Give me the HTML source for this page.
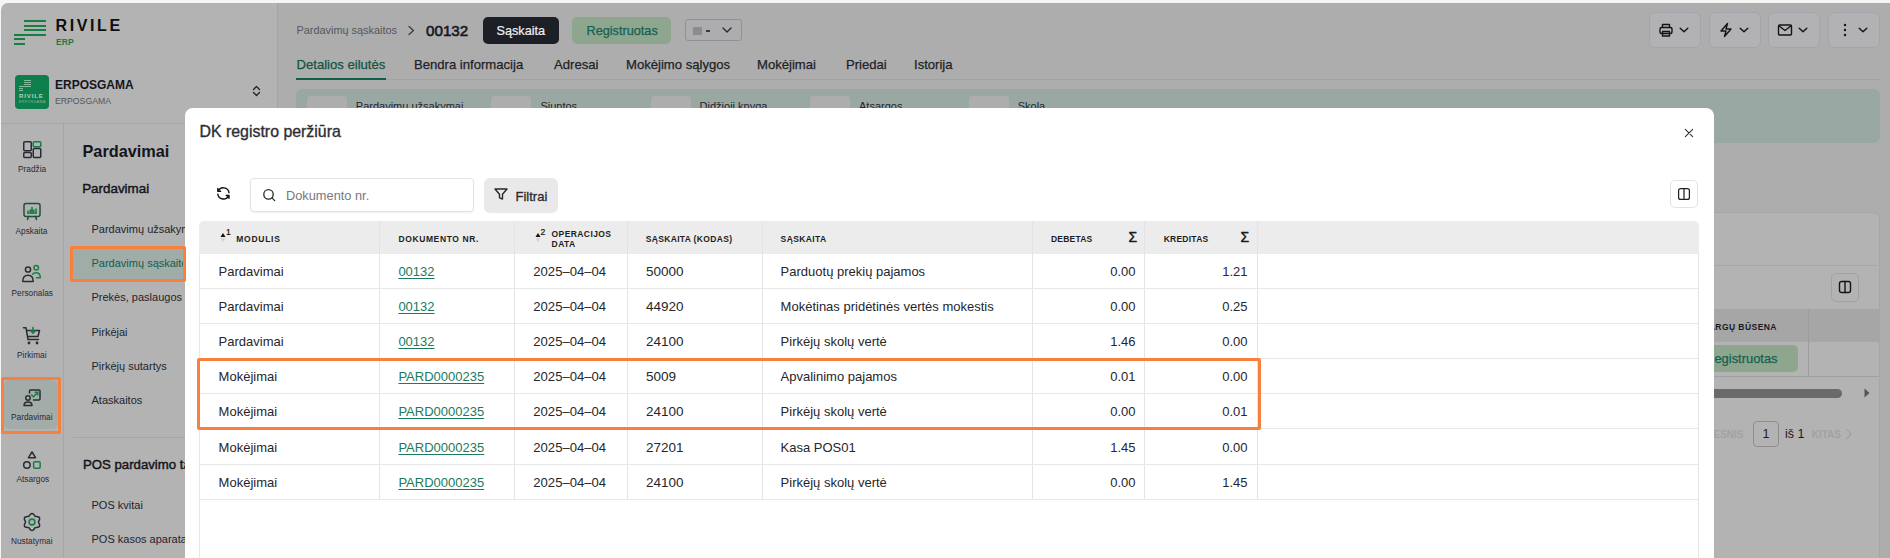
<!DOCTYPE html>
<html><head><meta charset="utf-8"><style>
html,body{margin:0;padding:0;}
body{width:1890px;height:558px;overflow:hidden;background:#f5f5f5;position:relative;font-family:"Liberation Sans",sans-serif;}
body>div,body>svg{position:absolute;}
.t{white-space:nowrap;line-height:1;}
</style></head><body>
<div style="left:1px;top:3px;width:277px;height:600px;background:#b3b3b3;border-top-left-radius:7px;"></div>
<div style="left:278px;top:3px;width:1612px;height:600px;background:#adadae;"></div>
<div style="left:1px;top:123px;width:277px;height:1px;background:#a5a5a5;"></div>
<div style="left:277px;top:3px;width:1px;height:600px;background:#a5a5a5;"></div>
<div style="left:63px;top:124px;width:1px;height:500px;background:#a5a5a5;"></div>
<div style="left:24px;top:20px;width:22px;height:2px;background:#177f44;"></div>
<div style="left:24px;top:24.5px;width:22px;height:2px;background:#177f44;"></div>
<div style="left:24px;top:29px;width:22px;height:2px;background:#177f44;"></div>
<div style="left:14px;top:33.5px;width:32px;height:2px;background:#177f44;"></div>
<div style="left:14px;top:38px;width:11px;height:2px;background:#177f44;"></div>
<div style="left:14px;top:42.5px;width:11px;height:2px;background:#177f44;"></div>
<div class="t" style="left:55.5px;top:18px;font-size:16px;color:#0d0d0d;font-weight:700;letter-spacing:2.6px;">RIVILE</div>
<div class="t" style="left:56px;top:37.7px;font-size:8.6px;color:#177f44;font-weight:700;">ERP</div>
<div style="left:15px;top:75px;width:34px;height:34px;background:#0d7e4c;border-radius:4px;"></div>
<div style="left:23.5px;top:80px;width:7.5px;height:1px;background:#7fbf9f;"></div>
<div style="left:23.5px;top:82px;width:7.5px;height:1px;background:#7fbf9f;"></div>
<div style="left:23.5px;top:84px;width:7.5px;height:1px;background:#7fbf9f;"></div>
<div style="left:19px;top:86px;width:12px;height:1px;background:#7fbf9f;"></div>
<div style="left:19px;top:88px;width:4px;height:1px;background:#7fbf9f;"></div>
<div style="left:19px;top:90px;width:4px;height:1px;background:#7fbf9f;"></div>
<div class="t" style="left:19px;top:93px;font-size:6.2px;color:#a9d3bb;font-weight:700;letter-spacing:0.8px;">RIVILE</div>
<div class="t" style="left:19px;top:100.5px;font-size:3.6px;color:#80bd9c;letter-spacing:0.4px;">ERPOSGAMA</div>
<div class="t" style="left:55px;top:79px;font-size:12px;color:#15151c;font-weight:700;">ERPOSGAMA</div>
<div class="t" style="left:55px;top:97px;font-size:8.7px;color:#55555c;">ERPOSGAMA</div>
<svg style="position:absolute;left:251px;top:85px" width="11" height="12" viewBox="0 0 11 12"><path d="M2.5 4.5 L5.5 1.5 L8.5 4.5 M2.5 7.5 L5.5 10.5 L8.5 7.5" fill="none" stroke="#222" stroke-width="1.3" stroke-linecap="round" stroke-linejoin="round"/></svg>
<svg style="position:absolute;left:22px;top:140px" width="20" height="19" viewBox="0 0 20 19" fill="none" stroke-linecap="round" stroke-linejoin="round"><rect x="1.75" y="1.75" width="7.5" height="9" rx="1" stroke="#2a2c33" stroke-width="1.5"/><rect x="1.75" y="12.5" width="7.5" height="5" rx="1" stroke="#2a2c33" stroke-width="1.5"/><rect x="11.25" y="1.75" width="7.5" height="5" rx="1" stroke="#177f44" stroke-width="1.5"/><rect x="11.25" y="8.5" width="7.5" height="9" rx="1" stroke="#2a2c33" stroke-width="1.5"/></svg>
<div class="t" style="left:18px;top:165px;font-size:8.3px;color:#2a2a33;">Pradžia</div>
<svg style="position:absolute;left:22px;top:202px" width="20" height="20" viewBox="0 0 20 20" fill="none" stroke-linecap="round" stroke-linejoin="round"><rect x="2" y="1.5" width="16" height="13" rx="2" stroke="#1f4f3c" stroke-width="1.5"/><path d="M6.5 14.5 L5.5 17.5 M13.5 14.5 L14.5 17.5" stroke="#1f4f3c" stroke-width="1.5"/><path d="M6 11 V9 M8.3 11 V8 M10 11 V5.5 M11.7 11 V8 M14 11 V7" stroke="#177f44" stroke-width="1.6"/><path d="M5.5 11.2 H14.5" stroke="#177f44" stroke-width="1.2"/></svg>
<div class="t" style="left:15.5px;top:227px;font-size:8.3px;color:#2a2a33;">Apskaita</div>
<svg style="position:absolute;left:21px;top:264px" width="22" height="20" viewBox="0 0 22 20" fill="none" stroke-linecap="round" stroke-linejoin="round"><circle cx="7" cy="5.5" r="2.6" stroke="#2a2c33" stroke-width="1.5"/><path d="M1.8 17.5 C1.8 13 4 11.3 7 11.3 C10 11.3 12.2 13 12.2 17.5 Z" stroke="#2a2c33" stroke-width="1.5"/><circle cx="15.2" cy="3.8" r="2.3" stroke="#177f44" stroke-width="1.5"/><path d="M11.5 10.3 C12.2 9.2 13.5 8.7 15.2 8.7 C17.8 8.7 19.3 10.5 19.3 13.7 H15.5" stroke="#177f44" stroke-width="1.5"/></svg>
<div class="t" style="left:11.5px;top:289px;font-size:8.3px;color:#2a2a33;">Personalas</div>
<svg style="position:absolute;left:22px;top:326px" width="20" height="20" viewBox="0 0 20 20" fill="none" stroke-linecap="round" stroke-linejoin="round"><path d="M1.5 1.8 H4 L6 13.5 H16.5" stroke="#2a2c33" stroke-width="1.5"/><path d="M5 4.5 H17.5 L16 10.5 H6" stroke="#2a2c33" stroke-width="1.5"/><circle cx="7" cy="17" r="1.4" fill="#2a2c33"/><circle cx="15" cy="17" r="1.4" fill="#2a2c33"/><path d="M11 1.5 V6.5 M8.8 4.8 L11 7.2 L13.2 4.8" stroke="#177f44" stroke-width="1.6"/></svg>
<div class="t" style="left:17px;top:351px;font-size:8.3px;color:#2a2a33;">Pirkimai</div>
<div style="left:4px;top:380px;width:54px;height:49px;background:#a3aca8;border-radius:6px;"></div>
<svg style="position:absolute;left:22px;top:388px" width="20" height="20" viewBox="0 0 20 20" fill="none" stroke-linecap="round" stroke-linejoin="round"><path d="M7.5 5 V3 C7.5 2.4 7.9 2 8.5 2 H17 C17.6 2 18 2.4 18 3 V11 C18 11.6 17.6 12 17 12 H11.5" stroke="#2a2c33" stroke-width="1.5"/><circle cx="6" cy="10" r="2.2" stroke="#2a2c33" stroke-width="1.5"/><path d="M2 17.5 C2 15 3.5 14 6 14 C8.5 14 10 15 10 17.5 Z" stroke="#2a2c33" stroke-width="1.5"/><path d="M9.5 7 L11.5 8.8 L15.5 4.5 M13.3 4.3 H15.8 V6.8" stroke="#177f44" stroke-width="1.5"/></svg>
<div class="t" style="left:11px;top:413px;font-size:8.3px;color:#2a2a33;">Pardavimai</div>
<svg style="position:absolute;left:22px;top:449px" width="20" height="21" viewBox="0 0 20 21" fill="none" stroke-linecap="round" stroke-linejoin="round"><path d="M10 2.9 L13.5 8.65 H6.5 Z" stroke="#2a2c33" stroke-width="1.5"/><circle cx="4.9" cy="16" r="3.25" stroke="#2a2c33" stroke-width="1.5"/><rect x="11.65" y="12.75" width="6.5" height="6.5" rx="1" stroke="#177f44" stroke-width="1.5"/></svg>
<div class="t" style="left:16.5px;top:475px;font-size:8.3px;color:#2a2a33;">Atsargos</div>
<svg style="position:absolute;left:22px;top:512px" width="20" height="20" viewBox="0 0 20 20" fill="none" stroke-linecap="round" stroke-linejoin="round"><path d="M8.36 2.27 C8.90 1.78 9.45 1.40 10.00 1.40 C10.55 1.40 11.10 1.78 11.64 2.27 C12.18 2.77 12.55 3.96 13.25 4.37 C13.95 4.78 15.17 4.49 15.87 4.71 C16.57 4.94 17.17 5.23 17.45 5.70 C17.72 6.17 17.67 6.84 17.51 7.56 C17.36 8.28 16.50 9.19 16.50 10.00 C16.50 10.81 17.36 11.72 17.51 12.44 C17.67 13.16 17.72 13.83 17.45 14.30 C17.17 14.77 16.57 15.06 15.87 15.29 C15.17 15.51 13.95 15.22 13.25 15.63 C12.55 16.04 12.18 17.23 11.64 17.73 C11.10 18.22 10.55 18.60 10.00 18.60 C9.45 18.60 8.90 18.22 8.36 17.73 C7.82 17.23 7.45 16.04 6.75 15.63 C6.05 15.22 4.83 15.51 4.13 15.29 C3.43 15.06 2.83 14.77 2.55 14.30 C2.28 13.83 2.33 13.16 2.49 12.44 C2.64 11.72 3.50 10.81 3.50 10.00 C3.50 9.19 2.64 8.28 2.49 7.56 C2.33 6.84 2.28 6.17 2.55 5.70 C2.83 5.23 3.43 4.94 4.13 4.71 C4.83 4.49 6.05 4.78 6.75 4.37 C7.45 3.96 7.82 2.77 8.36 2.27Z" stroke="#2a2c33" stroke-width="1.5"/><circle cx="10" cy="10" r="2.9" stroke="#177f44" stroke-width="1.6"/></svg>
<div class="t" style="left:11px;top:537px;font-size:8.3px;color:#2a2a33;">Nustatymai</div>
<div class="t" style="left:82.5px;top:142.5px;font-size:16.3px;color:#15151c;font-weight:700;">Pardavimai</div>
<div class="t" style="left:82.2px;top:182px;font-size:13.4px;color:#15151c;-webkit-text-stroke:0.45px #15151c;">Pardavimai</div>
<div style="left:72px;top:248px;width:113px;height:32px;background:#a0aca8;border-radius:4px;"></div>
<div class="t" style="left:91.5px;top:224px;font-size:11px;color:#24242c;">Pardavimų užsakymai</div>
<div class="t" style="left:91.5px;top:258px;font-size:11px;color:#115d4c;">Pardavimų sąskaitos</div>
<div class="t" style="left:91.5px;top:292px;font-size:11px;color:#24242c;">Prekės, paslaugos</div>
<div class="t" style="left:91.5px;top:326.5px;font-size:11px;color:#24242c;">Pirkėjai</div>
<div class="t" style="left:91.5px;top:360.5px;font-size:11px;color:#24242c;">Pirkėjų sutartys</div>
<div class="t" style="left:91.5px;top:394.5px;font-size:11px;color:#24242c;">Ataskaitos</div>
<div style="left:73px;top:437px;width:112px;height:1px;background:#a5a5a5;"></div>
<div class="t" style="left:83px;top:458px;font-size:13.2px;color:#15151c;-webkit-text-stroke:0.45px #15151c;">POS pardavimo taškai</div>
<div class="t" style="left:91.5px;top:499.5px;font-size:11px;color:#24242c;">POS kvitai</div>
<div class="t" style="left:91.5px;top:534px;font-size:11px;color:#24242c;">POS kasos aparatai</div>
<div class="t" style="left:296.5px;top:25px;font-size:10.9px;color:#56565c;">Pardavimų sąskaitos</div>
<svg style="position:absolute;left:406px;top:25px" width="10" height="11" viewBox="0 0 10 11" fill="none" stroke-linecap="round" stroke-linejoin="round"><path d="M3 1.5 L7.5 5.5 L3 9.5" stroke="#3a3a40" stroke-width="1.3"/></svg>
<div class="t" style="left:426px;top:23px;font-size:15.2px;color:#15151c;-webkit-text-stroke:0.55px #15151c;">00132</div>
<div style="left:483px;top:17px;width:75.5px;height:27px;background:#1d1f27;border-radius:5px;"></div>
<div class="t" style="left:496.5px;top:24.700000000000003px;font-size:12.7px;color:#f0f0f2;-webkit-text-stroke:0.2px #f0f0f2;">Sąskaita</div>
<div style="left:572px;top:17px;width:98.5px;height:27px;background:#8fa68e;border-radius:5px;"></div>
<div class="t" style="left:586.5px;top:24.700000000000003px;font-size:12.7px;color:#166052;-webkit-text-stroke:0.25px #166052;">Registruotas</div>
<div style="left:685px;top:19px;width:56.5px;height:21.5px;background:#adadb0;border:1px solid #8e9196;border-radius:3px;box-sizing:border-box;"></div>
<div style="left:693px;top:26.5px;width:9px;height:8px;background:#8b8b90;"></div>
<div style="left:706px;top:30px;width:4px;height:1.5px;background:#3a3a40;"></div>
<svg style="position:absolute;left:721px;top:26px" width="12" height="8" viewBox="0 0 12 8" fill="none" stroke-linecap="round" stroke-linejoin="round"><path d="M2 2 L6 6 L10 2" stroke="#2a2a30" stroke-width="1.4"/></svg>
<div style="left:296px;top:79px;width:1584px;height:1px;background:#a2a2a4;"></div>
<div class="t" style="left:296.5px;top:58px;font-size:13.1px;color:#0f5543;-webkit-text-stroke:0.25px #0f5543;">Detalios eilutės</div>
<div class="t" style="left:414px;top:58px;font-size:13.1px;color:#1f1f27;-webkit-text-stroke:0.25px #1f1f27;">Bendra informacija</div>
<div class="t" style="left:554px;top:58px;font-size:13.1px;color:#1f1f27;-webkit-text-stroke:0.25px #1f1f27;">Adresai</div>
<div class="t" style="left:626px;top:58px;font-size:13.1px;color:#1f1f27;-webkit-text-stroke:0.25px #1f1f27;">Mokėjimo sąlygos</div>
<div class="t" style="left:757px;top:58px;font-size:13.1px;color:#1f1f27;-webkit-text-stroke:0.25px #1f1f27;">Mokėjimai</div>
<div class="t" style="left:846px;top:58px;font-size:13.1px;color:#1f1f27;-webkit-text-stroke:0.25px #1f1f27;">Priedai</div>
<div class="t" style="left:914px;top:58px;font-size:13.1px;color:#1f1f27;-webkit-text-stroke:0.25px #1f1f27;">Istorija</div>
<div style="left:296px;top:78px;width:90px;height:2px;background:#0f5f47;"></div>
<div style="left:1649px;top:12px;width:52px;height:36px;background:#b2b2b4;border:1px solid #a2a6ac;border-radius:6px;box-sizing:border-box;"></div>
<div style="left:1709px;top:12px;width:52px;height:36px;background:#b2b2b4;border:1px solid #a2a6ac;border-radius:6px;box-sizing:border-box;"></div>
<div style="left:1768px;top:12px;width:52px;height:36px;background:#b2b2b4;border:1px solid #a2a6ac;border-radius:6px;box-sizing:border-box;"></div>
<div style="left:1828px;top:12px;width:52px;height:36px;background:#b2b2b4;border:1px solid #a2a6ac;border-radius:6px;box-sizing:border-box;"></div>
<svg style="position:absolute;left:1658px;top:22px" width="16" height="16" viewBox="0 0 16 16" fill="none" stroke-linecap="round" stroke-linejoin="round"><path d="M4.5 5.5 V2.5 H11.5 V5.5" stroke="#141418" stroke-width="1.4"/><rect x="2" y="5.5" width="12" height="6" rx="1.5" stroke="#141418" stroke-width="1.4"/><rect x="4.5" y="9.5" width="7" height="4.5" stroke="#141418" stroke-width="1.4"/></svg>
<svg style="position:absolute;left:1718px;top:22px" width="16" height="16" viewBox="0 0 16 16" fill="none" stroke-linecap="round" stroke-linejoin="round"><path d="M9.5 1.5 L3 9 H8 L6.5 14.5 L13 7 H8 Z" stroke="#141418" stroke-width="1.4"/></svg>
<svg style="position:absolute;left:1777px;top:22px" width="16" height="16" viewBox="0 0 16 16" fill="none" stroke-linecap="round" stroke-linejoin="round"><rect x="1.5" y="3" width="13" height="10" rx="1.2" stroke="#141418" stroke-width="1.4"/><path d="M1.8 3.8 L8 8.5 L14.2 3.8" stroke="#141418" stroke-width="1.4"/></svg>
<svg style="position:absolute;left:1837px;top:22px" width="16" height="16" viewBox="0 0 16 16" fill="none" stroke-linecap="round" stroke-linejoin="round"><circle cx="8" cy="3" r="1.2" fill="#141418"/><circle cx="8" cy="8" r="1.2" fill="#141418"/><circle cx="8" cy="13" r="1.2" fill="#141418"/></svg>
<svg style="position:absolute;left:1678px;top:26px" width="12" height="8" viewBox="0 0 12 8" fill="none" stroke-linecap="round" stroke-linejoin="round"><path d="M2.2 2.2 L6 5.8 L9.8 2.2" stroke="#141418" stroke-width="1.4"/></svg>
<svg style="position:absolute;left:1737.5px;top:26px" width="12" height="8" viewBox="0 0 12 8" fill="none" stroke-linecap="round" stroke-linejoin="round"><path d="M2.2 2.2 L6 5.8 L9.8 2.2" stroke="#141418" stroke-width="1.4"/></svg>
<svg style="position:absolute;left:1797px;top:26px" width="12" height="8" viewBox="0 0 12 8" fill="none" stroke-linecap="round" stroke-linejoin="round"><path d="M2.2 2.2 L6 5.8 L9.8 2.2" stroke="#141418" stroke-width="1.4"/></svg>
<svg style="position:absolute;left:1856.5px;top:26px" width="12" height="8" viewBox="0 0 12 8" fill="none" stroke-linecap="round" stroke-linejoin="round"><path d="M2.2 2.2 L6 5.8 L9.8 2.2" stroke="#141418" stroke-width="1.4"/></svg>
<div style="left:296px;top:89px;width:1584px;height:54px;background:#9aa8a4;border-radius:6px;"></div>
<div style="left:307px;top:96px;width:40px;height:40px;background:#adadad;border-radius:4px;"></div>
<div class="t" style="left:355.8px;top:100.5px;font-size:11px;color:#24242c;">Pardavimų užsakymai</div>
<div style="left:491px;top:96px;width:40px;height:40px;background:#adadad;border-radius:4px;"></div>
<div class="t" style="left:540.4px;top:100.5px;font-size:11px;color:#24242c;">Siuntos</div>
<div style="left:651px;top:96px;width:40px;height:40px;background:#adadad;border-radius:4px;"></div>
<div class="t" style="left:699.6px;top:100.5px;font-size:11px;color:#24242c;">Didžioji knyga</div>
<div style="left:810px;top:96px;width:40px;height:40px;background:#adadad;border-radius:4px;"></div>
<div class="t" style="left:859px;top:100.5px;font-size:11px;color:#24242c;">Atsargos</div>
<div style="left:969px;top:96px;width:40px;height:40px;background:#adadad;border-radius:4px;"></div>
<div class="t" style="left:1017.7px;top:100.5px;font-size:11px;color:#24242c;">Skola</div>
<div style="left:296px;top:211.5px;width:1584px;height:400px;background:#b3b3b3;border:1px solid #a6a6a6;border-radius:6px;box-sizing:border-box;"></div>
<div style="left:297px;top:265px;width:1580px;height:1px;background:#a6a6a6;"></div>
<div style="left:1830.5px;top:273px;width:28px;height:28.5px;background:#b3b3b3;border:1px solid #a2a2a2;border-radius:5px;box-sizing:border-box;"></div>
<svg style="position:absolute;left:1838px;top:280px" width="14" height="14" viewBox="0 0 14 14" fill="none" stroke-linecap="round" stroke-linejoin="round"><rect x="1.5" y="1.5" width="11" height="11" rx="2" stroke="#141418" stroke-width="1.4"/><path d="M7 1.5 V12.5" stroke="#141418" stroke-width="1.4"/></svg>
<div style="left:297px;top:309px;width:1582px;height:32.5px;background:#a6a6a6;"></div>
<div style="left:1808px;top:309px;width:1px;height:67px;background:#9c9c9c;"></div>
<div style="left:297px;top:375.5px;width:1582px;height:1px;background:#a0a0a0;"></div>
<div class="t" style="right:113.05px;top:323px;font-size:8.5px;color:#1a1a1a;font-weight:700;letter-spacing:0.45px;">ATSARGŲ BŪSENA</div>
<div style="left:1690px;top:345px;width:108px;height:26.5px;background:#8fa68e;border-radius:5px;"></div>
<div class="t" style="right:112.5px;top:352.5px;font-size:12.9px;color:#166052;-webkit-text-stroke:0.25px #166052;">Registruotas</div>
<div style="left:1600px;top:389px;width:242px;height:9px;background:#6a6a6a;border-radius:5px;"></div>
<svg style="position:absolute;left:1862px;top:387px" width="10" height="12" viewBox="0 0 10 12" fill="none" stroke-linecap="round" stroke-linejoin="round"><path d="M2.5 1.5 L7.5 6 L2.5 10.5 Z" fill="#555" stroke="none"/></svg>
<div class="t" style="right:146.5px;top:430px;font-size:10px;color:#a2a2a2;font-weight:700;">ANKSTESNIS</div>
<div style="left:1752.5px;top:420.5px;width:26.5px;height:26px;background:#b3b3b3;border:1px solid #8e8e8e;border-radius:4px;box-sizing:border-box;"></div>
<div class="t" style="left:1762.5px;top:427.5px;font-size:12.5px;color:#1a1a1a;">1</div>
<div class="t" style="left:1785px;top:428px;font-size:12.5px;color:#1a1a1a;">iš</div>
<div class="t" style="left:1797.5px;top:428px;font-size:12.5px;color:#1a1a1a;">1</div>
<div class="t" style="left:1811.7px;top:430px;font-size:10px;color:#a2a2a2;font-weight:700;">KITAS</div>
<svg style="position:absolute;left:1844px;top:428px" width="10" height="12" viewBox="0 0 10 12" fill="none" stroke-linecap="round" stroke-linejoin="round"><path d="M3 1.5 L7 6 L3 10.5" stroke="#a2a2a2" stroke-width="1.4"/></svg>
<div style="left:185px;top:108px;width:1529px;height:600px;background:#fff;border-radius:8px;"></div>
<div class="t" style="left:199.5px;top:124px;font-size:15.9px;color:#2e2e33;-webkit-text-stroke:0.35px #2e2e33;">DK registro peržiūra</div>
<svg style="position:absolute;left:1683px;top:127px" width="12" height="12" viewBox="0 0 12 12" fill="none" stroke-linecap="round" stroke-linejoin="round"><path d="M2.3 2.3 L9.7 9.7 M9.7 2.3 L2.3 9.7" stroke="#333" stroke-width="1.1"/></svg>
<div style="left:1669.5px;top:180px;width:28px;height:28px;background:#fff;border:1px solid #e3e3e3;border-radius:5px;box-sizing:border-box;"></div>
<svg style="position:absolute;left:1677px;top:187px" width="14" height="14" viewBox="0 0 14 14" fill="none" stroke-linecap="round" stroke-linejoin="round"><rect x="1.6" y="1.6" width="10.8" height="10.8" rx="2" stroke="#222" stroke-width="1.25"/><path d="M7 1.6 V12.4" stroke="#222" stroke-width="1.25"/></svg>
<svg style="position:absolute;left:215.4px;top:185.2px" width="16.8" height="16.8" viewBox="0 0 24 24" fill="none" stroke-linecap="round" stroke-linejoin="round"><path d="M20 11a8.1 8.1 0 0 0 -15.5 -2m-.5 -4v4h4M4 13a8.1 8.1 0 0 0 15.5 2m.5 4v-4h-4" stroke="#111" stroke-width="2"/></svg>
<div style="left:249.5px;top:177.5px;width:224px;height:34.5px;background:#fff;border:1px solid #e2e2e2;border-radius:4px;box-sizing:border-box;box-shadow:0 1px 2px rgba(0,0,0,0.06);"></div>
<svg style="position:absolute;left:262px;top:188px" width="14" height="14" viewBox="0 0 14 14" fill="none" stroke-linecap="round" stroke-linejoin="round"><circle cx="6.5" cy="6.4" r="4.7" stroke="#2a2a2e" stroke-width="1.3"/><path d="M10 9.9 L12.7 12.6" stroke="#2a2a2e" stroke-width="1.3"/></svg>
<div class="t" style="left:286px;top:189.5px;font-size:12.8px;color:#77777c;">Dokumento nr.</div>
<div style="left:483.5px;top:177.5px;width:74.5px;height:35px;background:#e9e9e9;border-radius:6px;"></div>
<svg style="position:absolute;left:493px;top:187px" width="16" height="14" viewBox="0 0 16 14" fill="none" stroke-linecap="round" stroke-linejoin="round"><path d="M2 2 H14 L9.5 7.3 V12 L6.5 10.8 V7.3 Z" stroke="#2a2a2e" stroke-width="1.4"/></svg>
<div class="t" style="left:515.5px;top:189.5px;font-size:13px;color:#2a2a2e;-webkit-text-stroke:0.3px #2a2a2e;">Filtrai</div>
<div style="left:199px;top:221px;width:1500px;height:400px;background:#fff;border:1px solid #e6e6e6;border-radius:5px 5px 0 0;box-sizing:border-box;"></div>
<div style="left:199px;top:221px;width:1500px;height:33px;background:#ececec;border-radius:5px 5px 0 0;"></div>
<div style="left:379px;top:221px;width:1px;height:278px;background:#e4e4e4;"></div>
<div style="left:514px;top:221px;width:1px;height:278px;background:#e4e4e4;"></div>
<div style="left:627px;top:221px;width:1px;height:278px;background:#e4e4e4;"></div>
<div style="left:762px;top:221px;width:1px;height:278px;background:#e4e4e4;"></div>
<div style="left:1032px;top:221px;width:1px;height:278px;background:#e4e4e4;"></div>
<div style="left:1144px;top:221px;width:1px;height:278px;background:#e4e4e4;"></div>
<div style="left:1257px;top:221px;width:1px;height:278px;background:#e4e4e4;"></div>
<div class="t" style="left:236.3px;top:235px;font-size:8.5px;color:#1e1e22;font-weight:700;letter-spacing:0.72px;">MODULIS</div>
<div class="t" style="left:398.4px;top:235px;font-size:8.5px;color:#1e1e22;font-weight:700;letter-spacing:0.62px;">DOKUMENTO NR.</div>
<div class="t" style="left:551.6px;top:230px;font-size:8.5px;color:#1e1e22;font-weight:700;letter-spacing:0.41px;">OPERACIJOS</div>
<div class="t" style="left:551.6px;top:240px;font-size:8.5px;color:#1e1e22;font-weight:700;letter-spacing:0.41px;">DATA</div>
<div class="t" style="left:645.7px;top:235px;font-size:8.5px;color:#1e1e22;font-weight:700;letter-spacing:0.34px;">SĄSKAITA (KODAS)</div>
<div class="t" style="left:780.6px;top:235px;font-size:8.5px;color:#1e1e22;font-weight:700;letter-spacing:0.4px;">SĄSKAITA</div>
<div class="t" style="left:1051px;top:235px;font-size:8.5px;color:#1e1e22;font-weight:700;letter-spacing:0.2px;">DEBETAS</div>
<div class="t" style="left:1163.7px;top:235px;font-size:8.5px;color:#1e1e22;font-weight:700;letter-spacing:0.24px;">KREDITAS</div>
<div class="t" style="left:1128.5px;top:230px;font-size:14px;color:#1a1a1e;-webkit-text-stroke:0.45px #1a1a1e;">Σ</div>
<div class="t" style="left:1240.5px;top:230px;font-size:14px;color:#1a1a1e;-webkit-text-stroke:0.45px #1a1a1e;">Σ</div>
<svg style="position:absolute;left:220.0px;top:232px" width="6" height="11" viewBox="0 0 6 11" fill="none" stroke-linecap="round" stroke-linejoin="round"><path d="M0.5 5 L3 1 L5.5 5 Z" fill="#111" stroke="none"/><path d="M0.5 6.3 L3 10 L5.5 6.3 Z" fill="#d3d3d3" stroke="none"/></svg>
<div class="t" style="left:226.0px;top:228px;font-size:8.6px;color:#111;-webkit-text-stroke:0.2px #111;">1</div>
<svg style="position:absolute;left:534.5px;top:232px" width="6" height="11" viewBox="0 0 6 11" fill="none" stroke-linecap="round" stroke-linejoin="round"><path d="M0.5 5 L3 1 L5.5 5 Z" fill="#111" stroke="none"/><path d="M0.5 6.3 L3 10 L5.5 6.3 Z" fill="#d3d3d3" stroke="none"/></svg>
<div class="t" style="left:540.5px;top:228px;font-size:8.6px;color:#111;-webkit-text-stroke:0.2px #111;">2</div>
<div style="left:200px;top:288px;width:1498px;height:1px;background:#e8e8e8;"></div>
<div class="t" style="left:218.6px;top:265px;font-size:13px;color:#26262b;">Pardavimai</div>
<div class="t" style="left:398.4px;top:265px;font-size:13px;color:#1c7a5e;text-decoration:underline;text-underline-offset:1.5px;text-decoration-thickness:1px;">00132</div>
<div class="t" style="left:533.3px;top:265px;font-size:13.1px;color:#26262b;">2025–04–04</div>
<div class="t" style="left:645.9px;top:265px;font-size:13.5px;color:#26262b;">50000</div>
<div class="t" style="left:780.6px;top:265px;font-size:13px;color:#26262b;">Parduotų prekių pajamos</div>
<div class="t" style="right:754.5px;top:265px;font-size:13px;color:#26262b;">0.00</div>
<div class="t" style="right:642.5px;top:265px;font-size:13px;color:#26262b;">1.21</div>
<div style="left:200px;top:323px;width:1498px;height:1px;background:#e8e8e8;"></div>
<div class="t" style="left:218.6px;top:300px;font-size:13px;color:#26262b;">Pardavimai</div>
<div class="t" style="left:398.4px;top:300px;font-size:13px;color:#1c7a5e;text-decoration:underline;text-underline-offset:1.5px;text-decoration-thickness:1px;">00132</div>
<div class="t" style="left:533.3px;top:300px;font-size:13.1px;color:#26262b;">2025–04–04</div>
<div class="t" style="left:645.9px;top:300px;font-size:13.5px;color:#26262b;">44920</div>
<div class="t" style="left:780.6px;top:300px;font-size:13px;color:#26262b;">Mokėtinas pridėtinės vertės mokestis</div>
<div class="t" style="right:754.5px;top:300px;font-size:13px;color:#26262b;">0.00</div>
<div class="t" style="right:642.5px;top:300px;font-size:13px;color:#26262b;">0.25</div>
<div style="left:200px;top:358px;width:1498px;height:1px;background:#e8e8e8;"></div>
<div class="t" style="left:218.6px;top:335px;font-size:13px;color:#26262b;">Pardavimai</div>
<div class="t" style="left:398.4px;top:335px;font-size:13px;color:#1c7a5e;text-decoration:underline;text-underline-offset:1.5px;text-decoration-thickness:1px;">00132</div>
<div class="t" style="left:533.3px;top:335px;font-size:13.1px;color:#26262b;">2025–04–04</div>
<div class="t" style="left:645.9px;top:335px;font-size:13.5px;color:#26262b;">24100</div>
<div class="t" style="left:780.6px;top:335px;font-size:13px;color:#26262b;">Pirkėjų skolų vertė</div>
<div class="t" style="right:754.5px;top:335px;font-size:13px;color:#26262b;">1.46</div>
<div class="t" style="right:642.5px;top:335px;font-size:13px;color:#26262b;">0.00</div>
<div style="left:200px;top:393px;width:1498px;height:1px;background:#e8e8e8;"></div>
<div class="t" style="left:218.6px;top:370px;font-size:13px;color:#26262b;">Mokėjimai</div>
<div class="t" style="left:398.4px;top:370px;font-size:13px;color:#1c7a5e;text-decoration:underline;text-underline-offset:1.5px;text-decoration-thickness:1px;">PARD0000235</div>
<div class="t" style="left:533.3px;top:370px;font-size:13.1px;color:#26262b;">2025–04–04</div>
<div class="t" style="left:645.9px;top:370px;font-size:13.5px;color:#26262b;">5009</div>
<div class="t" style="left:780.6px;top:370px;font-size:13px;color:#26262b;">Apvalinimo pajamos</div>
<div class="t" style="right:754.5px;top:370px;font-size:13px;color:#26262b;">0.01</div>
<div class="t" style="right:642.5px;top:370px;font-size:13px;color:#26262b;">0.00</div>
<div style="left:200px;top:428px;width:1498px;height:1px;background:#e8e8e8;"></div>
<div class="t" style="left:218.6px;top:405px;font-size:13px;color:#26262b;">Mokėjimai</div>
<div class="t" style="left:398.4px;top:405px;font-size:13px;color:#1c7a5e;text-decoration:underline;text-underline-offset:1.5px;text-decoration-thickness:1px;">PARD0000235</div>
<div class="t" style="left:533.3px;top:405px;font-size:13.1px;color:#26262b;">2025–04–04</div>
<div class="t" style="left:645.9px;top:405px;font-size:13.5px;color:#26262b;">24100</div>
<div class="t" style="left:780.6px;top:405px;font-size:13px;color:#26262b;">Pirkėjų skolų vertė</div>
<div class="t" style="right:754.5px;top:405px;font-size:13px;color:#26262b;">0.00</div>
<div class="t" style="right:642.5px;top:405px;font-size:13px;color:#26262b;">0.01</div>
<div style="left:200px;top:464px;width:1498px;height:1px;background:#e8e8e8;"></div>
<div class="t" style="left:218.6px;top:441px;font-size:13px;color:#26262b;">Mokėjimai</div>
<div class="t" style="left:398.4px;top:441px;font-size:13px;color:#1c7a5e;text-decoration:underline;text-underline-offset:1.5px;text-decoration-thickness:1px;">PARD0000235</div>
<div class="t" style="left:533.3px;top:441px;font-size:13.1px;color:#26262b;">2025–04–04</div>
<div class="t" style="left:645.9px;top:441px;font-size:13.5px;color:#26262b;">27201</div>
<div class="t" style="left:780.6px;top:441px;font-size:13px;color:#26262b;">Kasa POS01</div>
<div class="t" style="right:754.5px;top:441px;font-size:13px;color:#26262b;">1.45</div>
<div class="t" style="right:642.5px;top:441px;font-size:13px;color:#26262b;">0.00</div>
<div style="left:200px;top:499px;width:1498px;height:1px;background:#e8e8e8;"></div>
<div class="t" style="left:218.6px;top:476px;font-size:13px;color:#26262b;">Mokėjimai</div>
<div class="t" style="left:398.4px;top:476px;font-size:13px;color:#1c7a5e;text-decoration:underline;text-underline-offset:1.5px;text-decoration-thickness:1px;">PARD0000235</div>
<div class="t" style="left:533.3px;top:476px;font-size:13.1px;color:#26262b;">2025–04–04</div>
<div class="t" style="left:645.9px;top:476px;font-size:13.5px;color:#26262b;">24100</div>
<div class="t" style="left:780.6px;top:476px;font-size:13px;color:#26262b;">Pirkėjų skolų vertė</div>
<div class="t" style="right:754.5px;top:476px;font-size:13px;color:#26262b;">0.00</div>
<div class="t" style="right:642.5px;top:476px;font-size:13px;color:#26262b;">1.45</div>
<div style="left:1px;top:377px;width:60px;height:57px;border:3px solid #f7803f;border-radius:2px;box-sizing:border-box;"></div>
<div style="left:70px;top:246px;width:116px;height:35.5px;border:3px solid #f7803f;border-radius:2px;box-sizing:border-box;"></div>
<div style="left:197px;top:358px;width:1064px;height:72px;border:3px solid #f7803f;border-radius:2px;box-sizing:border-box;"></div>
</body></html>
